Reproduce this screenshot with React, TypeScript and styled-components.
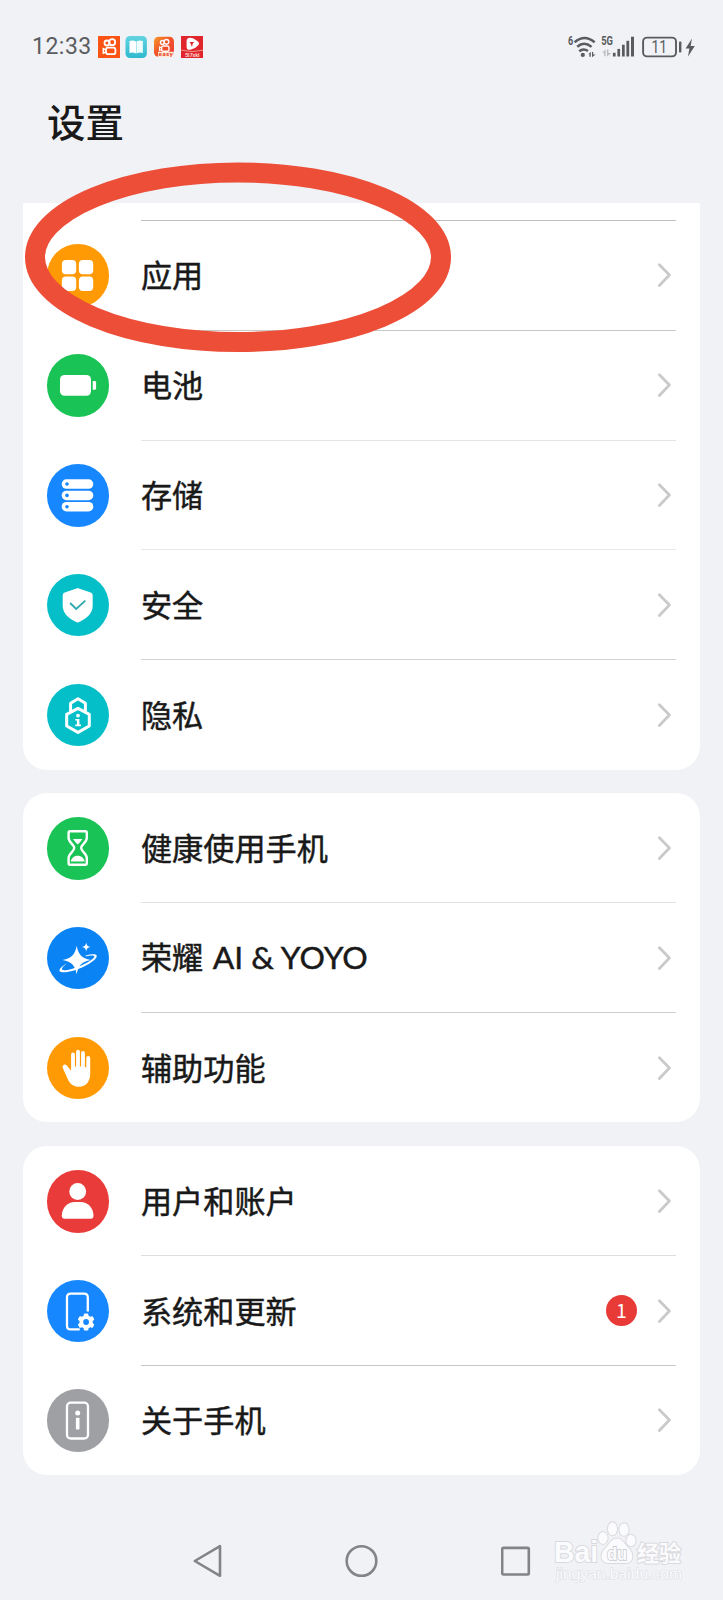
import React from "react";
import styled, { createGlobalStyle } from "styled-components";

const GlobalStyle = createGlobalStyle`
  * { box-sizing: border-box; }
  html, body { margin: 0; padding: 0; background: #f1f2f6; }
  body { font-family: "Noto Sans CJK SC", "Noto Sans", sans-serif; color: #191919; }
`;

const Screen = styled.main`
  position: relative;
  display: flex;
  flex-direction: column;
  width: 723px;
  height: 1600px;
  background: #f1f2f6;
  overflow: hidden;
`;

const StatusBar = styled.header`
  display: flex;
  flex: none;
  align-items: center;
  justify-content: space-between;
  height: 92px;
  padding: 2px 27px 0 32px;
`;

const StatusGroup = styled.div`
  display: flex;
  align-items: center;
`;

const Clock = styled.span`
  width: 65.5px;
  font-family: Roboto, sans-serif;
  font-size: 23px;
  line-height: 28px;
  letter-spacing: 0.5px;
  color: #5b5c60;
  white-space: nowrap;
`;

const AppBadges = styled.div`
  display: flex;
  gap: 5.4px;
  svg { display: block; }
`;

const Title = styled.h1`
  flex: none;
  height: 111px;
  margin: 0;
  padding-left: 47px;
  font-size: 38.5px;
  font-weight: 500;
  line-height: 56px;
`;

const List = styled.div`
  display: flex;
  flex: none;
  flex-direction: column;
  gap: 23.6px;
  height: 1315px;
  padding: 0 23px;
`;

const Row = styled.div`
  display: flex;
  align-items: stretch;
  height: 109.8px;
  padding: 0 24px 0 23.6px;
`;

const Card = styled.section<{ $scrolled?: boolean }>`
  padding: ${(p) => (p.$scrolled ? "17px 0 0.6px" : "0 0 0.4px")};
  background: #fff;
  border-radius: ${(p) => (p.$scrolled ? "0 0 24px 24px" : "24px")};

  ${Row}:first-child {
    height: ${(p) => (p.$scrolled ? "109.8px" : "109.2px")};
  }
`;

const IconSlot = styled.div`
  display: flex;
  align-items: center;
  width: 94.4px;
  padding-top: 1.6px;
`;

const Disc = styled.div<{ $color: string }>`
  width: 62.6px;
  height: 62.6px;
  border-radius: 50%;
  background: ${(p) => p.$color};
  svg { display: block; width: 100%; height: 100%; }
`;

const RowBody = styled.div<{ $line?: string }>`
  display: flex;
  flex: 1;
  align-items: center;
  border-top: 1px solid ${(p) => p.$line ?? "transparent"};
`;

const Label = styled.span`
  flex: 1;
  padding-bottom: 2px;
  font-size: 31.15px;
  font-weight: 400;
  line-height: 46px;
  -webkit-text-stroke: 0.45px #191919;
  white-space: nowrap;
`;

const Latin = styled.span`
  margin-left: 2.5px;
  font-family: Lato, sans-serif;
  font-size: 31.8px;
`;

const Badge = styled.span`
  width: 31px;
  height: 31px;
  margin-right: 20px;
  border-radius: 50%;
  background: #e83a36;
  color: #fff;
  font-size: 19.5px;
  line-height: 30px;
  text-align: center;
`;

const ChevronSvg = styled.svg`
  width: 14px;
  height: 26px;
  margin-right: 5px;
`;

const NavBar = styled.nav`
  display: flex;
  flex: none;
  justify-content: space-between;
  align-items: center;
  height: 82px;
  padding: 4px 192px 0;
  svg { display: block; }
`;

const Marker = styled.svg`
  position: absolute;
  left: 25px;
  top: 162px;
`;

const Watermark = styled.svg`
  position: absolute;
  left: 550px;
  top: 1516px;
`;

const Glyph = ({ children }: { children: React.ReactNode }) => (
  <svg viewBox="0.3 0 62.6 62.6" fill="#fff">{children}</svg>
);

const AppsIcon = () => (
  <Glyph>
    <rect x="15.2" y="16" width="14.3" height="14.3" rx="4" />
    <rect x="32.2" y="16" width="14.3" height="14.3" rx="4" />
    <rect x="15.2" y="32.6" width="14.3" height="14.3" rx="4" />
    <rect x="32.2" y="32.6" width="14.3" height="14.3" rx="4" />
  </Glyph>
);

const BatteryIcon = () => (
  <Glyph>
    <rect x="13.3" y="21" width="31" height="20.7" rx="4.5" />
    <path d="M46 27H48Q49.4 27 49.4 28.4V34.4Q49.4 35.8 48 35.8H46Z" />
  </Glyph>
);

const StorageIcon = () => (
  <Glyph>
    {[15.3, 26.7, 38].map((y) => (
      <g key={y}>
        <rect x="15" y={y} width="31.6" height="9.5" rx="4.7" />
        <circle cx="20.3" cy={y + 4.7} r="1.8" fill="#1687ff" />
      </g>
    ))}
  </Glyph>
);

const ShieldIcon = () => (
  <Glyph>
    <path d="M29.8 14.4Q31 13.8 32.2 14.4L44 18.6Q46 19.4 46 21.5V31.5C46 39.5 40 44.4 32.6 48Q31 48.8 29.4 48C22 44.4 16 39.5 16 31.5V21.5Q16 19.4 18 18.6Z" />
    <path d="M23.4 29L29.5 35L38.6 26.6" fill="none" stroke="#2fa9ae" strokeWidth="1.9" />
  </Glyph>
);

const PrivacyIcon = () => (
  <Glyph>
    <g fill="none" stroke="#fff" strokeWidth="3" strokeLinejoin="round">
      <path d="M23.9 27V19.2L31.3 14.7L38.7 19.2V27" />
      <path d="M31.3 24.4L42.6 30.4V42L31.3 48.4L20 42V30.4Z" />
    </g>
    <circle cx="31.3" cy="31.6" r="1.9" />
    <path d="M28.6 35H32.7V40.6H34.3V42.3H28.6V40.6H30.2V36.6H28.6Z" />
  </Glyph>
);

const HourglassIcon = () => (
  <Glyph>
    <path
      d="M23.4 14.2H38.6Q40.1 14.2 40.1 15.7V21C40.1 25.5 34.5 27.5 34.5 31C34.5 34.5 40.1 36.5 40.1 41V46.3Q40.1 47.8 38.6 47.8H23.4Q21.9 47.8 21.9 46.3V41C21.9 36.5 27.5 34.5 27.5 31C27.5 27.5 21.9 25.5 21.9 21V15.7Q21.9 14.2 23.4 14.2Z"
      fill="none" stroke="#fff" strokeWidth="2.4"
    />
    <path d="M26.3 22H35.7Q34 25 31 27.4Q28 25 26.3 22Z" />
    <path d="M24 44.6C25 40.5 28 38.8 31 38.8C34 38.8 37 40.5 38 44.6Z" />
  </Glyph>
);

const AiIcon = () => (
  <Glyph>
    <path
      d="M39 28.4C44 27.2 49 26.5 50 28.5C51 31 45 36 36 40.2C26 44.6 15 46.5 13 44.2C11.8 42.4 15 39.2 20 36.4C15.8 39.6 14.6 41.8 15.6 42.8C17.5 44.2 26 42.2 34.6 38.4C43 34.6 48.4 30.8 47.6 29.2C47 28 43 28.4 39 29.4Z"
    />
    <path d="M30 18.8C31.6 27.4 34.8 31.2 44.2 33C34.8 34.8 31.6 38.6 30 47.3C28.4 38.6 25.2 34.8 15.8 33C25.2 31.2 28.4 27.4 30 18.8Z" />
    <path d="M39.5 15.8C40.1 18.6 41 19.5 43.8 20C41 20.5 40.1 21.5 39.5 24.4C38.9 21.5 38 20.5 35.2 20C38 19.5 38.9 18.6 39.5 15.8Z" />
  </Glyph>
);

const HandIcon = () => (
  <Glyph>
    <path d="M24.4 17.4a1.9 1.9 0 0 1 3.8 0V29.5h1.2V14.6a1.9 1.9 0 0 1 3.8 0V29.5h1.2V16a1.9 1.9 0 0 1 3.8 0V30.2h1.4V21a1.95 1.95 0 0 1 3.9 0V36.5C43.5 44.5 39.2 49.8 32.5 49.8C26.5 49.8 23.2 46.8 21 42L16.1 30.9C15.2 28.2 18.2 26.4 20.1 28.4L24.4 33.8Z" />
  </Glyph>
);

const UserIcon = () => (
  <Glyph>
    <circle cx="31" cy="21.5" r="8.4" />
    <path d="M15.1 45.5C15.4 37.5 21 32 28 32H34C41 32 46.5 37.5 46.8 45.5Q46.8 48.8 44 48.8H18Q15.1 48.8 15.1 45.5Z" />
  </Glyph>
);

const SystemIcon = () => (
  <Glyph>
    <path d="M33 49.4H24Q20.3 49.4 20.3 45.7V17.3Q20.3 13.6 24 13.6H37.4Q41.1 13.6 41.1 17.3V31.5" fill="none" stroke="#fff" strokeWidth="2.3" />
    <circle cx="39.4" cy="42" r="4.8" fill="none" stroke="#fff" strokeWidth="3.8" />
    {[0, 60, 120, 180, 240, 300].map((a) => (
      <rect key={a} x="37.1" y="33.5" width="4.6" height="4" rx="1.2" transform={`rotate(${a} 39.4 42)`} />
    ))}
  </Glyph>
);

const AboutIcon = () => (
  <Glyph>
    <rect x="20.3" y="13.7" width="21" height="35.8" rx="3.8" fill="none" stroke="#fff" strokeWidth="2.3" />
    <circle cx="31" cy="24" r="2.5" />
    <rect x="29.2" y="28.8" width="3.6" height="11.8" rx="0.8" />
  </Glyph>
);

const Chevron = () => (
  <ChevronSvg viewBox="0 0 14 26" fill="none" stroke="#cacacb" strokeWidth="2.8" strokeLinecap="round" strokeLinejoin="round">
    <path d="M2.4 2.8L12.4 13.1L2.4 23.4" />
  </ChevronSvg>
);

const Camera = () => (
  <g fill="none" stroke="#fff" strokeWidth="1.8">
    <circle cx="9" cy="7" r="2.5" />
    <circle cx="14.2" cy="6.2" r="3" />
    <rect x="8" y="11.6" width="9.4" height="6.6" rx="2" />
    <path d="M8 14L5.3 12.7V17.2L8 16" strokeWidth="1.5" />
  </g>
);

const StatusApps = () => (
  <AppBadges>
    <svg width="22.4" height="22" viewBox="0 0 22.4 22">
      <rect width="22.4" height="22" rx="0.6" fill="#fb5314" />
      <Camera />
    </svg>
    <svg width="22.4" height="22" viewBox="0 0 22.4 22">
      <defs>
        <linearGradient id="book" x1="0" y1="0" x2="0" y2="1">
          <stop offset="0" stopColor="#62d4df" />
          <stop offset="1" stopColor="#2fb9cf" />
        </linearGradient>
      </defs>
      <rect x="0.5" width="21.4" height="22" rx="4.5" fill="url(#book)" />
      <path d="M4.5 5Q8 3.6 11 5.4V17.6Q8 15.8 4.5 17Z" fill="#fff" />
      <path d="M17.9 5Q14.4 3.6 11.4 5.4V17.6Q14.4 15.8 17.9 17Z" fill="#eefcfc" />
    </svg>
    <svg width="22.4" height="22" viewBox="0 0 22.4 22">
      <defs>
        <linearGradient id="easy" x1="0" y1="0" x2="1" y2="1">
          <stop offset="0" stopColor="#f79a2c" />
          <stop offset="0.45" stopColor="#f2542a" />
          <stop offset="1" stopColor="#ee3a35" />
        </linearGradient>
      </defs>
      <rect x="1" y="0.8" width="20" height="20" rx="4.5" fill="url(#easy)" />
      <g transform="translate(2.4 1) scale(.78)"><Camera /></g>
      <path d="M5 15.8H21V18Q20 20.9 17 20.9H5Z" fill="#fde7d6" />
      <text x="5.6" y="19.6" fontFamily="Lato" fontWeight="900" fontSize="6.4" fill="#e83a20" textLength="14.4">easy</text>
    </svg>
    <svg width="22.4" height="22" viewBox="0 0 22.4 22">
      <rect width="22.4" height="22" fill="#e0262c" />
      <path d="M5.6 4.6Q6 1.8 9 1.8Q12.4 1.6 15.6 4.4Q19.6 7 17 9.4Q14.4 12.6 9.4 13.8Q5.8 14.2 5.6 11Z" fill="#fff" />
      <path d="M8.6 6H13.4L11.8 7.6L11 11L9.8 8Z" fill="#e0262c" />
      <path d="M0 14.2Q11 17 22.4 14.2" fill="none" stroke="#f6b3a6" strokeWidth="0.8" />
      <text x="4" y="21" fontFamily="Roboto" fontWeight="700" fontSize="5.8" fill="#f9cfc6" textLength="14.6">5i7ski</text>
    </svg>
  </AppBadges>
);

const StatusSignals = () => (
  <svg width="130" height="28" viewBox="566 32.5 130 28" fill="#5a5b5e">
    <text x="568" y="44.4" fontFamily="Roboto" fontWeight="700" fontSize="12" textLength="5.2" lengthAdjust="spacingAndGlyphs">6</text>
    <g fill="none" stroke="#5a5b5e" strokeWidth="2.5">
      <path d="M574.6 41.7Q584.5 33.2 594.6 41.7" />
      <path d="M577.2 46.2Q584 40.2 591.6 46.4" />
      <path d="M579.2 50.8Q583.4 47.2 588 50.6" />
    </g>
    <circle cx="582.8" cy="54.4" r="2.1" />
    <path d="M588.4 53.8L590.8 51.2V56.2H589.4V53.8ZM592 51.6H593.2V54H595.6L592 56.8Z" />
    <text x="601.2" y="44.9" fontFamily="Roboto" fontWeight="700" fontSize="12.2" textLength="11.8" lengthAdjust="spacingAndGlyphs">5G</text>
    <path d="M602.2 52.2L605.6 49V55.8H604.2V52.2ZM607 49H608.4V52.4H611.2L607 56Z" fill="#b9babd" />
    <rect x="612.9" y="52.3" width="2.7" height="3.7" />
    <rect x="617.4" y="48.4" width="2.7" height="7.6" />
    <rect x="622" y="44.2" width="2.7" height="11.8" />
    <rect x="626.4" y="40.3" width="2.8" height="15.7" />
    <rect x="631" y="36.2" width="3" height="19.8" />
    <rect x="643.1" y="37.1" width="32.9" height="18.8" rx="4" fill="none" stroke="#5a5b5e" strokeWidth="1.9" />
    <text x="659.3" y="52.8" fontFamily="Roboto" fontSize="17.5" textAnchor="middle" textLength="15.6" lengthAdjust="spacingAndGlyphs">11</text>
    <rect x="679" y="41" width="2.4" height="11" rx="0.8" />
    <path d="M692 38L685.6 48H689.4L688 56L694.8 45.6H690.6Z" />
  </svg>
);

interface Item {
  label: React.ReactNode;
  color: string;
  icon: React.ReactNode;
  line?: string;
  badge?: number;
}

const groups: Item[][] = [
  [
    { label: "应用", color: "#ff9a05", icon: <AppsIcon />, line: "#bfbfbf" },
    { label: "电池", color: "#19c355", icon: <BatteryIcon />, line: "#c8c8c8" },
    { label: "存储", color: "#1687ff", icon: <StorageIcon />, line: "#e4e4e4" },
    { label: "安全", color: "#05bfc8", icon: <ShieldIcon />, line: "#e8e8e8" },
    { label: "隐私", color: "#05bfc8", icon: <PrivacyIcon />, line: "#d2d2d2" },
  ],
  [
    { label: "健康使用手机", color: "#19c355", icon: <HourglassIcon /> },
    { label: <>荣耀 <Latin>AI &amp; YOYO</Latin></>, color: "#0a83f5", icon: <AiIcon />, line: "#e2e2e2" },
    { label: "辅助功能", color: "#ff9a05", icon: <HandIcon />, line: "#cecece" },
  ],
  [
    { label: "用户和账户", color: "#e93b39", icon: <UserIcon /> },
    { label: "系统和更新", color: "#1687ff", icon: <SystemIcon />, line: "#dedede", badge: 1 },
    { label: "关于手机", color: "#9fa0a4", icon: <AboutIcon />, line: "#c8c8c8" },
  ],
];

export default function App() {
  return (
    <Screen>
      <GlobalStyle />
      <StatusBar>
        <StatusGroup>
          <Clock>12:33</Clock>
          <StatusApps />
        </StatusGroup>
        <StatusSignals />
      </StatusBar>
      <Title>设置</Title>
      <List>
        {groups.map((items, g) => (
          <Card key={g} $scrolled={g === 0}>
            {items.map((item, i) => (
              <Row key={i}>
                <IconSlot>
                  <Disc $color={item.color}>{item.icon}</Disc>
                </IconSlot>
                <RowBody $line={item.line}>
                  <Label>{item.label}</Label>
                  {item.badge && <Badge>{item.badge}</Badge>}
                  <Chevron />
                </RowBody>
              </Row>
            ))}
          </Card>
        ))}
      </List>
      <NavBar>
        <svg width="30" height="34" viewBox="0 0 30 34" fill="none" stroke="#848487" strokeWidth="2.6" strokeLinejoin="round">
          <path d="M2.8 17L28 2.2V31.8Z" />
        </svg>
        <svg width="34" height="34" viewBox="0 0 34 34" fill="none" stroke="#848487" strokeWidth="2.6">
          <circle cx="16.5" cy="17" r="14.8" />
        </svg>
        <svg width="30" height="34" viewBox="0 0 30 34" fill="none" stroke="#848487" strokeWidth="2.6">
          <rect x="1.2" y="3.9" width="26.6" height="26.6" rx="1.2" />
        </svg>
      </NavBar>
      <Marker width="426" height="190" viewBox="0 0 426 190">
        <ellipse cx="213" cy="95.2" rx="203" ry="84.8" fill="none" stroke="#ed4e38" strokeWidth="20" />
      </Marker>
      <Watermark width="140" height="74" viewBox="550 1516 140 74" fill="#fbfbfe" stroke="#d9dadd" strokeWidth="2" paintOrder="stroke">
        <text x="554" y="1562" fontFamily="Liberation Sans" fontWeight="700" fontSize="29" textLength="44" lengthAdjust="spacingAndGlyphs">Bai</text>
        <path d="M617 1538.5C622 1538.5 624 1543 627.5 1547C631.5 1551 633.5 1555 632 1559C630 1564.5 623 1562.8 617 1562.8C611 1562.8 604 1564.5 602 1559C600.5 1555 602.5 1551 606.5 1547C610 1543 612 1538.5 617 1538.5Z" />
        <ellipse cx="603" cy="1538" rx="4.6" ry="6" />
        <ellipse cx="612.5" cy="1528.8" rx="4.6" ry="6.5" />
        <ellipse cx="624" cy="1529.5" rx="4.6" ry="6.3" />
        <ellipse cx="631" cy="1540.5" rx="4.6" ry="5.8" />
        <text x="607" y="1559.5" fontFamily="Liberation Sans" fontWeight="700" fontSize="18" strokeWidth="1.8" stroke="#cfd0d4" textLength="20" lengthAdjust="spacingAndGlyphs">du</text>
        <text x="637" y="1561" fontFamily="Noto Sans CJK SC" fontWeight="700" fontSize="22" textLength="44">经验</text>
        <text x="556" y="1579" fontFamily="Liberation Sans" fontSize="15" strokeWidth="1.2" stroke="#dddee2" textLength="126" lengthAdjust="spacingAndGlyphs">jingyan.baidu.com</text>
      </Watermark>
    </Screen>
  );
}
